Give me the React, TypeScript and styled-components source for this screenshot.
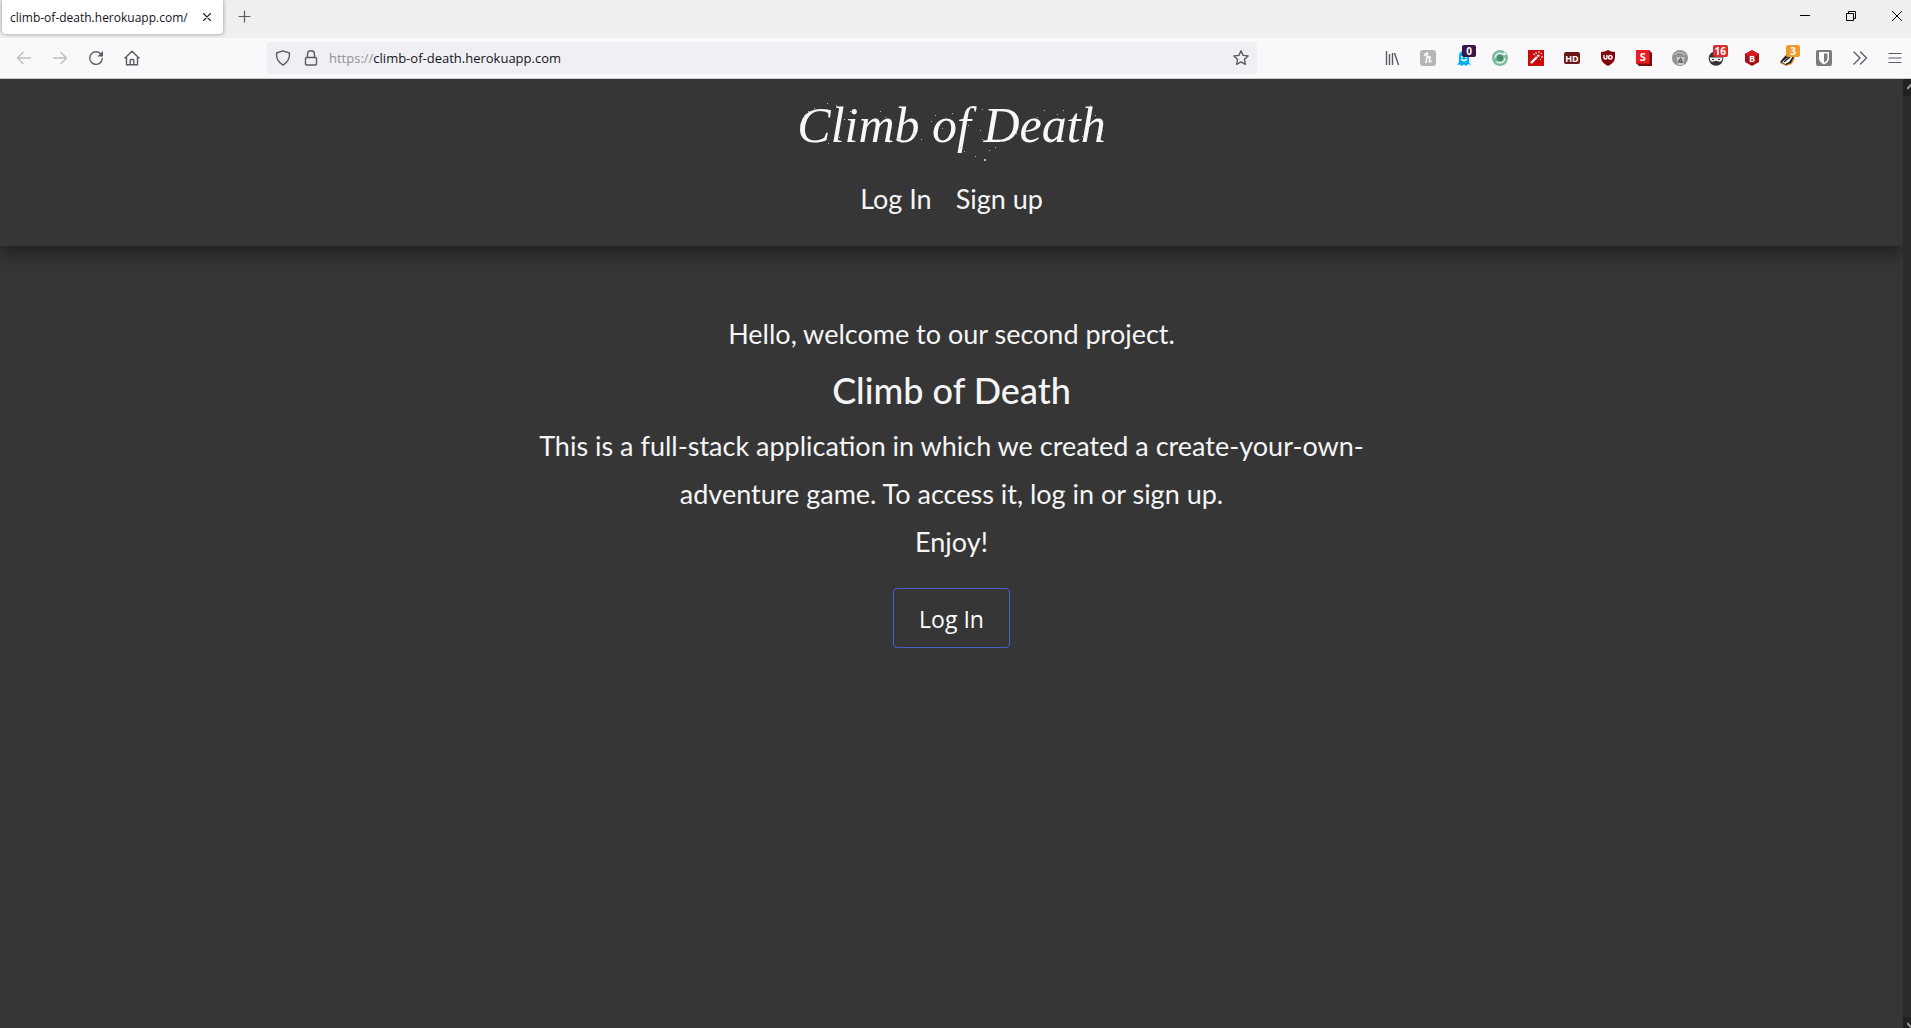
import React from "react";
import styled, { createGlobalStyle } from "styled-components";

const UI_FONT = `"Open Sans", "Noto Sans", sans-serif`;
const PAGE_FONT = `Lato, "Open Sans", sans-serif`;

const GlobalStyle = createGlobalStyle`
  *, *::before, *::after { box-sizing: border-box; }
  body { margin: 0; background: #363636; }
`;

const Window = styled.div`
  min-height: 100vh;
  display: flex;
  flex-direction: column;
  font-family: ${UI_FONT};
`;

const TabBar = styled.div`
  display: flex;
  align-items: flex-start;
  height: 38px;
  padding: 0 6px 0 2px;
  background: #efefef;
`;

const Tab = styled.div`
  display: flex;
  align-items: center;
  justify-content: space-between;
  width: 221px;
  height: 34px;
  padding: 0 8px;
  background: #fff;
  border-radius: 0 0 4px 4px;
  box-shadow: 0 0 4px rgba(0, 0, 0, 0.4);
  color: #15141a;
  font-size: 12px;
`;

const IconButton = styled.button<{ $w: number; $h: number; $c?: string }>`
  display: flex;
  flex: none;
  align-items: center;
  justify-content: center;
  width: ${(p) => p.$w}px;
  height: ${(p) => p.$h}px;
  padding: 0;
  border: 0;
  background: none;
  color: ${(p) => p.$c ?? "#5b5b66"};
`;

const NewTab = styled.div`
  margin-left: 14px;
`;

const WindowControls = styled.div`
  display: flex;
  gap: 30px;
  margin-left: auto;
`;

const Toolbar = styled.div`
  display: flex;
  align-items: center;
  height: 41px;
  padding-left: 6px;
  background: #f9f9fb;
  border-bottom: 1px solid #cccccc;
`;

const Spring = styled.div`
  flex: 117 1 0;
`;

const AddressBar = styled.form`
  display: flex;
  flex: 974 1 0;
  align-items: center;
  height: 32px;
  padding: 0 8px;
  background: #f0f0f4;
  border-radius: 4px;
  font-size: 13px;
`;

const AddressIcons = styled.span`
  display: flex;
  gap: 12px;
  margin-right: 10px;
  color: #5b5b66;
`;

const Scheme = styled.label`
  color: #8f8f96;
`;

const AddressInput = styled.input`
  flex: 1;
  min-width: 0;
  padding: 0;
  border: 0;
  outline: 0;
  background: none;
  color: #15141a;
  font: inherit;
`;

const ExtIcon = styled.span`
  position: relative;
  display: flex;
`;

const Badge = styled.span<{ $bg: string }>`
  position: absolute;
  top: -5px;
  right: -4px;
  min-width: 14px;
  height: 12px;
  padding: 0 2px;
  border-radius: 2px;
  background: ${(p) => p.$bg};
  color: #fff;
  font: 700 10px/12px ${UI_FONT};
  text-align: center;
`;

const Viewport = styled.div`
  display: flex;
  flex: 1;
`;

const Page = styled.div`
  flex: 1;
  overflow: hidden;
  background: #363636;
  color: #f5f5f5;
  font-family: ${PAGE_FONT};
  text-align: center;
`;

const Scrollbar = styled.div`
  display: flex;
  flex-direction: column;
  justify-content: space-between;
  width: 8px;
  overflow: hidden;
  background: #2b2b2b;
`;

const ScrollEnd = styled.button<{ $h: number }>`
  display: flex;
  width: 17px;
  height: ${(p) => p.$h}px;
  padding: 4px 0 0 4px;
  border: 0;
  overflow: hidden;
  background: #202020;
  color: #9a9a9a;
`;

const Header = styled.header`
  height: 167px;
  padding-top: 14px;
  box-shadow: 0 8px 16px rgba(10, 10, 10, 0.5);
`;

const Logo = styled.h1`
  position: relative;
  width: 320px;
  margin: 0 auto;
  color: #f8f8f8;
  font: italic 400 50px/64px "Liberation Serif", serif;
  white-space: nowrap;
`;

const Splatter = styled.svg`
  position: absolute;
  top: 0;
  left: 0;
`;

const Nav = styled.nav`
  display: flex;
  justify-content: center;
  gap: 24px;
  margin-top: 18px;
  font-size: 27px;
  line-height: 48px;

  a {
    color: inherit;
    text-decoration: none;
  }
`;

const Main = styled.main`
  max-width: 864px;
  margin: 0 auto;
  padding-top: 64px;
  font-size: 27px;
  line-height: 48px;

  p {
    margin: 0;
  }
`;

const Title = styled.h2`
  margin: 8px 0;
  font-size: 36px;
  font-weight: 500;
  line-height: 48px;
`;

const LogInButton = styled.button`
  height: 60px;
  margin-top: 22px;
  padding: 2px 25px 0;
  border: 1px solid #485fc7;
  border-radius: 4px;
  background: none;
  color: #fff;
  font: 400 23px/36px ${UI_FONT};
`;

const line = {
  fill: "none",
  stroke: "currentColor",
  strokeWidth: 1.4,
  strokeLinecap: "round" as const,
  strokeLinejoin: "round" as const,
};

const GlyphSvg = styled.svg`
  overflow: visible;
`;

function Glyph({ children }: { children: React.ReactNode }) {
  return (
    <GlyphSvg width={16} height={16} viewBox="0 0 16 16" aria-hidden="true">
      {children}
    </GlyphSvg>
  );
}

const artText = { fontFamily: "Open Sans, sans-serif", fontWeight: 700, textAnchor: "middle" as const };

const extensions: { name: string; art: React.ReactNode; badge?: string; badgeBg?: string }[] = [
  {
    name: "Library",
    art: <path {...line} strokeLinecap="butt" stroke="#5b5b66" d="M2.5 1v14M5.5 4v11M8.5 3v12M10.5 3l4 12" />,
  },
  {
    name: "Honey",
    art: (
      <>
        <rect width="16" height="16" rx="3" fill="#b5b5b5" />
        <path {...line} stroke="#fff" strokeWidth={1.5} d="M4.500 5.500q1-2.500 3-2.500L6 12.500M6.500 8.500Q10 5 10 7.500L9.200 11q.300 1.500 2 0" />
      </>
    ),
  },
  {
    name: "Ghostery",
    art: (
      <>
        <path fill="#00aef0" d="M3 12V6q0-5 5-5t5 5v6l2 3-3-1-1.500 2L8 14.500 5.500 16 4 14.500 1 15z" />
        <circle cx="6" cy="7" r="1" fill="#fff" />
        <circle cx="10" cy="7" r="1" fill="#fff" />
        <path {...line} stroke="#fff" d="M5.500 9.500q2.500 2 5 0" />
      </>
    ),
    badge: "0",
    badgeBg: "#3a1647",
  },
  {
    name: "Tracker shield",
    art: (
      <>
        <circle cx="8" cy="8" r="8" fill="#7dbb9e" />
        <circle cx="8" cy="8" r="4.800" fill="none" stroke="#e9f5ef" strokeWidth="1.500" strokeDasharray="11 4" />
        <circle cx="8" cy="8" r="3.200" fill="#4b8b70" />
        <circle cx="12.500" cy="3.800" r="1.500" fill="#e9f5ef" />
      </>
    ),
  },
  {
    name: "Magic wand",
    art: (
      <>
        <rect width="16" height="16" fill="#c90c0c" />
        <path d="M3 13l6-6" stroke="#fff" strokeWidth="2.400" />
        <path d="M9.500 6.500l1.500-1.500" stroke="#fff" strokeWidth="2.400" />
        <path d="M8 2v2M11 1v2M14 3l-1.500 1M13 7h2M12 9l1 1M5 4l2 1" stroke="#fff" />
      </>
    ),
  },
  {
    name: "HD",
    art: (
      <>
        <rect y="2" width="16" height="12" rx="2" fill="#6c1519" />
        <text {...artText} x="8" y="11.500" fontSize="9" fill="#fff">HD</text>
      </>
    ),
  },
  {
    name: "Origin",
    art: (
      <>
        <path fill="#800610" d="M8 0q3 2 7 2v5q0 6-7 9Q1 13 1 7V2q4 0 7-2z" />
        <path {...line} stroke="#fff" d="M4 5.500v2q0 1.500 1.500 1.500T7 7.500V5.500" />
        <circle cx="10.300" cy="7.300" r="1.800" fill="none" stroke="#fff" strokeWidth="1.400" />
      </>
    ),
  },
  {
    name: "Stylish",
    art: (
      <>
        <path fill="#7b0c10" d="M13 0l3 3v13H3l-3-3z" />
        <rect width="13.500" height="13.500" fill="#ed1c24" />
        <text {...artText} x="6.800" y="11" fontSize="11" fill="#fff">S</text>
      </>
    ),
  },
  {
    name: "Cleaner",
    art: (
      <>
        <circle cx="8" cy="8" r="8" fill="#929292" />
        <path d="M2.500 5l3-2.500h4L13.500 5" fill="none" stroke="#c4c4c4" strokeWidth="1.200" />
        <path d="M4.500 7h8l-1 8h-6z" fill="#c8c8c8" />
        <path d="M8.500 8.500l2 3.500h-4z" fill="none" stroke="#555" strokeWidth="1.300" strokeDasharray="3 1" />
      </>
    ),
  },
  {
    name: "Incognito",
    art: (
      <>
        <circle cx="8" cy="8.500" r="7.300" fill="#333" />
        <path fill="#eee" d="M1.500 7.500h13v1.500l-1 2q-2 1.500-4 0H6.500q-2 1.500-4 0z" />
        <path d="M4 9.500h2M10 9.500h2" stroke="#333" strokeWidth="1.200" />
      </>
    ),
    badge: "16",
    badgeBg: "#da2b2f",
  },
  {
    name: "Blocker",
    art: (
      <>
        <path fill="#a90f14" d="M8 0l7 4v8l-7 4-7-4V4z" />
        <path fill="#d71920" d="M8 0l7 4-7 4-7-4z" />
        <text {...artText} x="8" y="11.500" fontSize="9" fill="#fff">B</text>
      </>
    ),
  },
  {
    name: "Badger",
    art: (
      <>
        <path fill="#f0932b" d="M0 13l3-5 6-4 6 4-3 6-6 2z" />
        <path fill="#222" d="M0 12l6-7 8 2-3 6-5 2z" />
        <path fill="#fff" d="M2 12l5-4 6-2-4 6-4 2z" />
        <path stroke="#222" strokeWidth="1.500" d="M4 12l6-5" />
      </>
    ),
    badge: "3",
    badgeBg: "#ee9a2d",
  },
  {
    name: "Vault",
    art: (
      <>
        <rect width="16" height="16" rx="2" fill="#7c7c7c" />
        <path fill="#fff" d="M3 2h10v6q0 4-5 6.500Q3 12 3 8z" />
        <path fill="#7c7c7c" d="M8 3.500h3.500V8q0 2.500-3.500 4.500z" />
      </>
    ),
  },
  {
    name: "More tools",
    art: <path {...line} stroke="#5b5b66" d="M2 2l6 6-6 6M8.500 2l6 6-6 6" />,
  },
];

const specks: [number, number, number][] = [
  [12, 24, 1], [16, 18, 1], [22, 15, 1], [35, 10, 1], [44, 12, 1], [52, 26, 1], [36, 50, 1], [28, 46, 1],
  [58, 18, 1], [47, 44, 1], [62, 48, 1], [88, 18, 1], [93, 24, 1], [99, 34, 1], [106, 45, 1], [97, 49, 1],
  [122, 40, 1], [129, 46, 1], [139, 28, 1], [143, 22, 1], [150, 35, 1], [160, 20, 1], [168, 54, 1], [172, 58, 1],
  [176, 32, 1], [188, 37, 1], [190, 46, 1], [183, 63, 1], [192, 66, 2], [197, 57, 1], [203, 54, 1], [208, 48, 1],
  [214, 44, 1], [190, 16, 1], [224, 40, 1], [233, 43, 1], [245, 24, 1], [252, 17, 1], [258, 48, 1], [265, 21, 1],
  [271, 17, 1], [276, 27, 1], [290, 43, 1], [296, 38, 1], [303, 22, 1], [306, 42, 1], [310, 37, 1], [298, 12, 1],
];

export default function App() {
  return (
    <Window>
      <GlobalStyle />
      <TabBar>
        <Tab>
          <span>climb-of-death.herokuapp.com/</span>
          <IconButton $w={16} $h={16} $c="#222" aria-label="Close tab">
            <Glyph><path {...line} strokeWidth={1.1} d="M4.500 4.500l7 7M11.500 4.500l-7 7" /></Glyph>
          </IconButton>
        </Tab>
        <NewTab>
          <IconButton $w={16} $h={32} aria-label="New tab">
            <Glyph><path {...line} strokeWidth={1.2} d="M7.500 3v11M2 8.500h11" /></Glyph>
          </IconButton>
        </NewTab>
        <WindowControls>
          <IconButton $w={16} $h={32} $c="#000" aria-label="Minimize">
            <Glyph><path d="M3 7.500h10" stroke="currentColor" /></Glyph>
          </IconButton>
          <IconButton $w={16} $h={32} $c="#000" aria-label="Restore">
            <Glyph><path fill="none" stroke="currentColor" d="M3.500 5.500h7v7h-7zM5.500 5.500v-2h7v7h-2" /></Glyph>
          </IconButton>
          <IconButton $w={16} $h={32} $c="#000" aria-label="Close">
            <Glyph><path d="M3 3l10 10M13 3L3 13" stroke="currentColor" /></Glyph>
          </IconButton>
        </WindowControls>
      </TabBar>

      <Toolbar>
        <IconButton $w={36} $h={36} $c="#bcbcc2" aria-label="Back">
          <Glyph><path {...line} d="M14.500 8h-13M7 2.500L1.500 8 7 13.500" /></Glyph>
        </IconButton>
        <IconButton $w={36} $h={36} $c="#bcbcc2" aria-label="Forward">
          <Glyph><path {...line} d="M1.500 8h13M9 2.500L14.500 8 9 13.500" /></Glyph>
        </IconButton>
        <IconButton $w={36} $h={36} aria-label="Reload">
          <Glyph>
            <path {...line} d="M13 4.200A6.300 6.300 0 1 0 14.300 8.500" />
            <path fill="currentColor" d="M15 1v5.500H9.500z" />
          </Glyph>
        </IconButton>
        <IconButton $w={36} $h={36} aria-label="Home">
          <Glyph><path {...line} d="M1 8l7-6.700L15 8M2.500 7v7.800h11V7M6.200 14.500v-4q0-1 1-1h1.600q1 0 1 1v4" /></Glyph>
        </IconButton>
        <Spring />
        <AddressBar onSubmit={(e) => e.preventDefault()}>
          <AddressIcons>
            <Glyph><path {...line} d="M8 .800L14.500 3q.500 8-6.500 12.200Q1 11 1.500 3z" /></Glyph>
            <Glyph><path {...line} d="M3.500 7.500h9q1 0 1 1v5.500q0 1-1 1h-9q-1 0-1-1V8.500q0-1 1-1zM4.500 7.500V4.300q0-3.500 3.500-3.500t3.500 3.500v3.200" /></Glyph>
          </AddressIcons>
          <Scheme htmlFor="address">https://</Scheme>
          <AddressInput id="address" type="text" defaultValue="climb-of-death.herokuapp.com" />
          <IconButton $w={16} $h={32} type="button" aria-label="Bookmark this page">
            <Glyph><path {...line} d="M8 .900l2.100 4.500 5 .600-3.700 3.400 1 4.900L8 11.900l-4.400 2.400 1-4.900L.900 6l5-.600z" /></Glyph>
          </IconButton>
        </AddressBar>
        <Spring />
        {extensions.map((ext) => (
          <IconButton key={ext.name} $w={36} $h={36} aria-label={ext.name}>
            <ExtIcon>
              <Glyph>{ext.art}</Glyph>
              {ext.badge && <Badge $bg={ext.badgeBg!}>{ext.badge}</Badge>}
            </ExtIcon>
          </IconButton>
        ))}
        <IconButton $w={33} $h={36} aria-label="Menu">
          <Glyph><path {...line} strokeWidth={1.2} d="M2 3.500h12M2 8h12M2 12.500h12" /></Glyph>
        </IconButton>
      </Toolbar>

      <Viewport>
        <Page>
          <Header>
            <Logo>
              Climb of Death
              <Splatter width="320" height="72" aria-hidden="true">
                {specks.map(([x, y, s], i) => (
                  <rect key={i} x={x} y={y} width={s} height={s} fill="#b8b8b8" />
                ))}
              </Splatter>
            </Logo>
            <Nav>
              <a href="#login">Log In</a>
              <a href="#signup">Sign up</a>
            </Nav>
          </Header>
          <Main>
            <p>Hello, welcome to our second project.</p>
            <Title>Climb of Death</Title>
            <p>This is a full-stack application in which we created a create-your-own-adventure game. To access it, log in or sign up.</p>
            <p>Enjoy!</p>
            <LogInButton>Log In</LogInButton>
          </Main>
        </Page>
        <Scrollbar>
          <ScrollEnd $h={17} aria-label="Scroll up">
            <svg width="9" height="9" viewBox="0 0 9 9"><path d="M0 6l4.500-4.500L9 6" fill="none" stroke="currentColor" strokeWidth="2" /></svg>
          </ScrollEnd>
          <ScrollEnd $h={11} aria-label="Scroll down">
            <svg width="9" height="9" viewBox="0 0 9 9"><path d="M0 2l4.500 4.500L9 2" fill="none" stroke="currentColor" strokeWidth="2" /></svg>
          </ScrollEnd>
        </Scrollbar>
      </Viewport>
    </Window>
  );
}
